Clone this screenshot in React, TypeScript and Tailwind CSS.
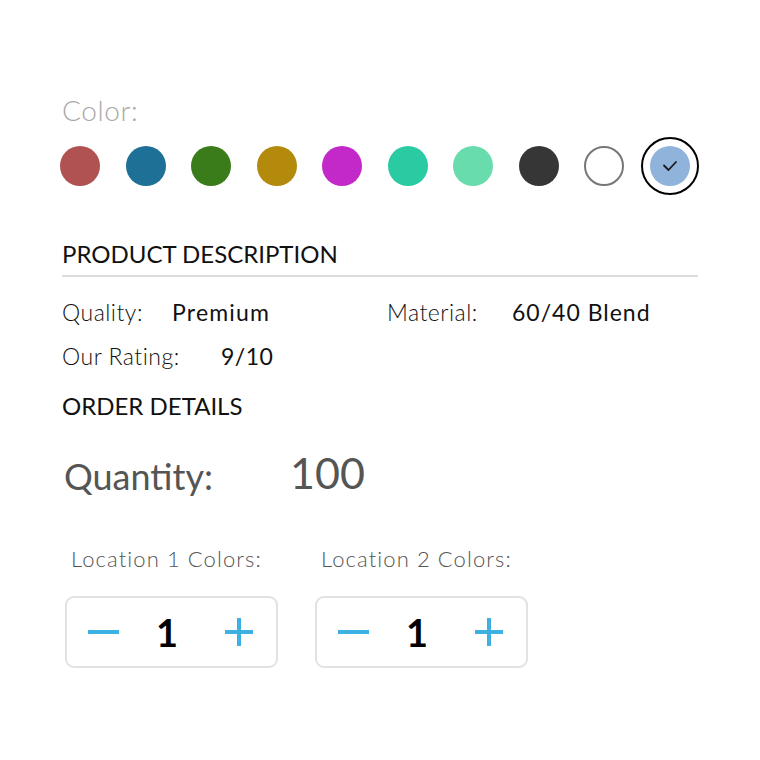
import { useState } from "react";

const SWATCHES = [
  "#b05252",
  "#1f7096",
  "#3a7b1a",
  "#b38a0b",
  "#c328c8",
  "#2acba2",
  "#69dcad",
  "#363636",
  "#ffffff",
  "#8fb3da",
];

function Stepper({ label }: { label: string }) {
  const [n, setN] = useState(1);
  return (
    <div className="flex flex-col">
      <div className="pl-[6px] text-[22px] leading-[26px] text-[#555] font-light tracking-[1.1px]">{label}</div>
      <div className="mt-[24px] w-[213px] h-[72px] border-2 border-[#e2e2e2] rounded-[9px] flex items-center justify-between pl-[20px] pr-[23px]">
        <button className="w-[32px] h-[34px] flex items-center justify-center" onClick={() => setN(Math.max(0, n - 1))}>
          <span className="block w-[31px] h-[4px] bg-[#3db1e1]" />
        </button>
        <span className="-ml-[10px] text-[38px] font-bold text-black leading-none">{n}</span>
        <button className="relative w-[28px] h-[28px]" onClick={() => setN(n + 1)}>
          <span className="absolute left-0 top-[12px] w-[28px] h-[4px] bg-[#3db1e1]" />
          <span className="absolute top-0 left-[12px] w-[4px] h-[28px] bg-[#3db1e1]" />
        </button>
      </div>
    </div>
  );
}

export default function App() {
  const [selected, setSelected] = useState(9);

  return (
    <div className="w-[760px] h-[760px] bg-white px-[62px] pt-[93px] font-['Lato',sans-serif]">
      <div className="text-[28px] leading-[34px] text-[#a8a8a8] font-light tracking-[0.6px]">Color:</div>

      <div className="mt-[19px] -ml-[2px] flex items-center gap-[25.5px]">
        {SWATCHES.map((c, idx) => (
          <button
            key={idx}
            onClick={() => setSelected(idx)}
            className={
              "w-[40px] h-[40px] rounded-full flex items-center justify-center " +
              (c === "#ffffff" ? "border-2 border-[#777] " : "") +
              (selected === idx ? "outline-2 outline-offset-[7px] outline-black" : "")
            }
            style={{ backgroundColor: c }}
          >
            {selected === idx && (
              <svg width="16" height="12" viewBox="0 0 16 12" fill="none">
                <path d="M2 5.5 L6.5 10 L14 2" stroke="#1a1a1a" strokeWidth="1.8" strokeLinecap="round" strokeLinejoin="round" />
              </svg>
            )}
          </button>
        ))}
      </div>

      <div className="mt-[53px] text-[24px] leading-[30px] text-[#111]">PRODUCT DESCRIPTION</div>
      <div className="mt-[6px] h-[2px] bg-[#dcdcdc]" />

      <div className="mt-[20px] flex text-[23px] leading-[30px] text-[#111] tracking-[0.5px]">
        <div className="w-[325px] flex">
          <span className="font-light w-[110px]">Quality:</span>
          <span className="font-normal tracking-[1.2px]">Premium</span>
        </div>
        <div className="flex">
          <span className="font-light w-[125px]">Material:</span>
          <span className="font-normal tracking-[1px]">60/40 Blend</span>
        </div>
      </div>
      <div className="mt-[14px] flex text-[23px] leading-[30px] text-[#111] tracking-[0.5px]">
        <span className="font-light w-[159px]">Our Rating:</span>
        <span className="font-normal">9/10</span>
      </div>

      <div className="mt-[20px] text-[24px] leading-[30px] text-[#111]">ORDER DETAILS</div>

      <div className="mt-[27px] flex items-end text-[#555]">
        <span className="ml-[2px] w-[226px] text-[36px] leading-[44px]">Quantity:</span>
        <span className="text-[43px] leading-[50px]">100</span>
      </div>

      <div className="mt-[48px] ml-[3px] flex gap-[37px]">
        <Stepper label="Location 1 Colors:" />
        <Stepper label="Location 2 Colors:" />
      </div>
    </div>
  );
}
